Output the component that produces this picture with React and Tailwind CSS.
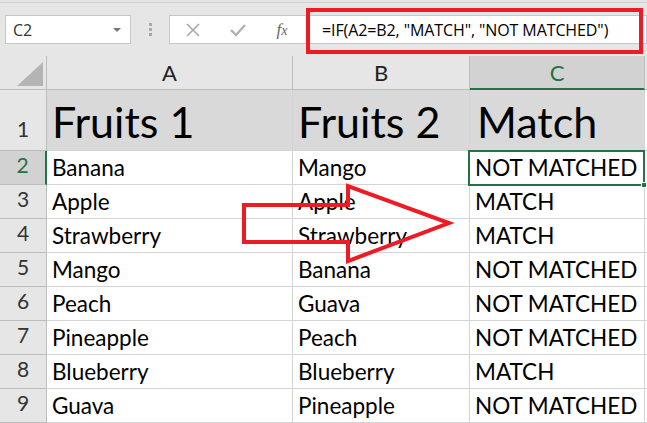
import React from "react";

const rows = [
  ["Banana", "Mango", "NOT MATCHED"],
  ["Apple", "Apple", "MATCH"],
  ["Strawberry", "Strawberry", "MATCH"],
  ["Mango", "Banana", "NOT MATCHED"],
  ["Peach", "Guava", "NOT MATCHED"],
  ["Pineapple", "Peach", "NOT MATCHED"],
  ["Blueberry", "Blueberry", "MATCH"],
  ["Guava", "Pineapple", "NOT MATCHED"],
];

const cell = "bg-white border-r border-b border-[#d4d4d4] flex items-end pl-[5px] pb-[5px] text-[22.5px] leading-none text-black whitespace-nowrap overflow-visible";

export default function App() {
  return (
    <div className="relative w-[647px] h-[423px] overflow-hidden bg-[#e6e6e6] font-['Lato',sans-serif]">
      {/* Top toolbar */}
      <div className="h-[57px] border-t border-[#d0d0d0] mt-[2px] flex items-start pt-[12px] pl-[5px]">
        <div className="w-[126px] h-[29px] bg-white border border-[#c6c6c6] flex items-center justify-between pl-[7px] pr-[9px]">
          <span className="text-[16px] text-[#333] font-['Open_Sans',sans-serif]">C2</span>
          <span className="w-0 h-0 border-l-[4px] border-r-[4px] border-t-[4px] border-l-transparent border-r-transparent border-t-[#777]" />
        </div>
        <div className="w-[38px] h-[29px] flex flex-col items-center justify-center gap-[2px]">
          <span className="w-[3px] h-[3px] bg-[#a8a8a8]" />
          <span className="w-[3px] h-[3px] bg-[#a8a8a8]" />
          <span className="w-[3px] h-[3px] bg-[#a8a8a8]" />
        </div>
        <div className="flex-1 h-[29px] bg-white border border-[#c6c6c6] flex items-center">
          <div className="w-[45px] flex justify-center">
            <svg width="14" height="14" viewBox="0 0 14 14">
              <path d="M1 1 L13 13 M13 1 L1 13" stroke="#a9a9a9" strokeWidth="1.6" fill="none" />
            </svg>
          </div>
          <div className="w-[45px] flex justify-center">
            <svg width="16" height="14" viewBox="0 0 16 14">
              <path d="M1 7 L6 12 L15 2" stroke="#b2b2b2" strokeWidth="2.4" fill="none" />
            </svg>
          </div>
          <div className="w-[44px] flex justify-center">
            <span className="font-['Liberation_Serif',serif] italic text-[17px] text-[#666]">
              f<span className="text-[14px]">x</span>
            </span>
          </div>
          <span className="ml-[18px] text-[16px] tracking-[-0.1px] text-black font-['Open_Sans',sans-serif] whitespace-nowrap">
            =IF(A2=B2, "MATCH", "NOT MATCHED")
          </span>
        </div>
      </div>

      {/* Grid */}
      <div className="grid grid-cols-[47px_246px_177px_175px_1fr] grid-rows-[34px_61px_repeat(8,34px)] -mt-[3px]">
        {/* column headers */}
        <div className="relative border-r border-b border-[#bdbdbd] bg-[#e6e6e6]">
          <svg className="absolute left-[16px] top-[5px]" width="28" height="26" viewBox="0 0 28 26">
            <polygon points="1,25 27,1 27,25" fill="#b4b4b4" />
          </svg>
        </div>
        <div className="border-r border-b border-[#bdbdbd] bg-[#e6e6e6] flex items-center justify-center text-[22px] text-[#222]">A</div>
        <div className="border-r border-b border-[#bdbdbd] bg-[#e6e6e6] flex items-center justify-center text-[22px] text-[#222]">B</div>
        <div className="border-r border-[#bdbdbd] border-b-2 border-b-[#217346] bg-[#d2d2d2] flex items-center justify-center text-[22px] text-[#217346]">C</div>
        <div className="border-b border-[#bdbdbd] bg-[#e6e6e6]" />

        {/* row 1 */}
        <div className="border-r border-b border-[#bdbdbd] bg-[#e6e6e6] flex items-end justify-center pb-[6px] text-[21px] text-[#333]">1</div>
        <div className="bg-[#d9d9d9] border-r border-b border-[#d4d4d4] flex items-end pl-[5px] pb-[7px] text-[43px] leading-none text-black">Fruits 1</div>
        <div className="bg-[#d9d9d9] border-r border-b border-[#d4d4d4] flex items-end pl-[5px] pb-[7px] text-[43px] leading-none text-black">Fruits 2</div>
        <div className="bg-[#d9d9d9] border-r border-b border-[#d4d4d4] flex items-end pl-[7px] pb-[7px] text-[43px] leading-none text-black">Match</div>
        <div className="bg-white border-b border-[#d4d4d4]" />

        {rows.map((r, i) => (
          <React.Fragment key={i}>
            <div
              className={
                i === 0
                  ? "bg-[#d2d2d2] border-r-2 border-r-[#217346] border-b border-b-[#bdbdbd] flex items-end justify-center pb-[4px] text-[21px] text-[#217346]"
                  : "bg-[#e6e6e6] border-r border-b border-[#bdbdbd] flex items-end justify-center pb-[4px] text-[21px] text-[#333]"
              }
            >
              {i + 2}
            </div>
            <div className={cell}>{r[0]}</div>
            <div className={cell}>{r[1]}</div>
            <div className={cell}>{r[2]}</div>
            <div className="bg-white border-b border-[#d4d4d4]" />
          </React.Fragment>
        ))}
      </div>

      {/* selected cell */}
      <div className="absolute left-[468px] top-[150px] w-[177px] h-[36px] border-2 border-[#217346]">
        <div className="absolute -right-[4px] -bottom-[4px] w-[6px] h-[6px] bg-[#217346] border border-white" />
      </div>

      {/* red formula highlight */}
      <div className="absolute left-[306px] top-[8px] w-[337px] h-[46px] border-4 border-[#ed1c24]" />

      {/* arrow */}
      <svg className="absolute left-0 top-0 pointer-events-none" width="647" height="423">
        <polygon
          points="244,205 348,205 348,186 449,223 348,261 348,242 244,242"
          fill="none"
          stroke="#ed1c24"
          strokeWidth="4"
        />
      </svg>
    </div>
  );
}
